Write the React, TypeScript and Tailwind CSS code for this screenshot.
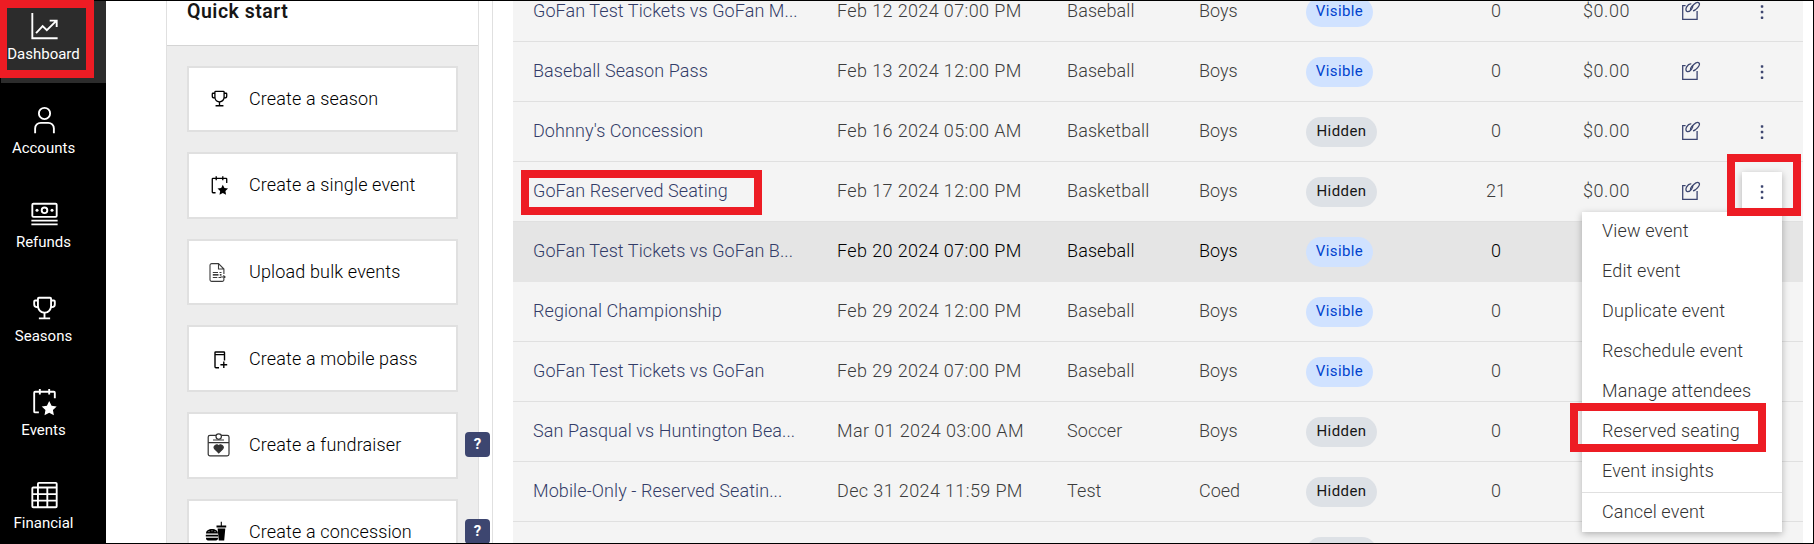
import type { ReactNode } from "react";

type Status = "Visible" | "Hidden";

interface EventRow {
  name: string;
  date: string;
  sport: string;
  group: string;
  status: Status;
  sold: string;
  revenue?: string;
  hovered?: boolean;
  open?: boolean;
}

const rows: EventRow[] = [
  { name: "GoFan Test Tickets vs GoFan M...", date: "Feb 12 2024 07:00 PM", sport: "Baseball", group: "Boys", status: "Visible", sold: "0", revenue: "$0.00" },
  { name: "Baseball Season Pass", date: "Feb 13 2024 12:00 PM", sport: "Baseball", group: "Boys", status: "Visible", sold: "0", revenue: "$0.00" },
  { name: "Dohnny's Concession", date: "Feb 16 2024 05:00 AM", sport: "Basketball", group: "Boys", status: "Hidden", sold: "0", revenue: "$0.00" },
  { name: "GoFan Reserved Seating", date: "Feb 17 2024 12:00 PM", sport: "Basketball", group: "Boys", status: "Hidden", sold: "21", revenue: "$0.00", open: true },
  { name: "GoFan Test Tickets vs GoFan B...", date: "Feb 20 2024 07:00 PM", sport: "Baseball", group: "Boys", status: "Visible", sold: "0", hovered: true },
  { name: "Regional Championship", date: "Feb 29 2024 12:00 PM", sport: "Baseball", group: "Boys", status: "Visible", sold: "0" },
  { name: "GoFan Test Tickets vs GoFan", date: "Feb 29 2024 07:00 PM", sport: "Baseball", group: "Boys", status: "Visible", sold: "0" },
  { name: "San Pasqual vs Huntington Bea...", date: "Mar 01 2024 03:00 AM", sport: "Soccer", group: "Boys", status: "Hidden", sold: "0" },
  { name: "Mobile-Only - Reserved Seatin...", date: "Dec 31 2024 11:59 PM", sport: "Test", group: "Coed", status: "Hidden", sold: "0" },
];

const TROPHY =
  "M26 7h-2V6a2 2 0 0 0-2-2H10a2 2 0 0 0-2 2v1H6a2 2 0 0 0-2 2v3a4 4 0 0 0 4 4h.32A8.19 8.19 0 0 0 15 21.94V26h-5v2h12v-2h-5v-4.06A7.93 7.93 0 0 0 23.74 16H24a4 4 0 0 0 4-4V9a2 2 0 0 0-2-2zM8 14a2 2 0 0 1-2-2V9h2zm14 0a6 6 0 0 1-6.18 6A6.18 6.18 0 0 1 10 13.84V6h12zm4-2a2 2 0 0 1-2 2V9h2z";
const CALENDAR =
  "M26 4h-4V2h-2v2h-8V2h-2v2H6a2 2 0 0 0-2 2v20a2 2 0 0 0 2 2h4v-2H6V6h4v2h2V6h8v2h2V6h4v6h2V6a2 2 0 0 0-2-2z";
const STAR =
  "M21 15l2.55 4.94 5.45.79-4 3.84L26 30l-5-2.56L16 30l1-5.43-4-3.84 5.6-.79z";

function Glyph({ className, children }: { className: string; children: ReactNode }) {
  return (
    <svg viewBox="0 0 32 32" fill="currentColor" className={className}>
      {children}
    </svg>
  );
}

function TrophyIcon({ className }: { className: string }) {
  return (
    <Glyph className={className}>
      <path d={TROPHY} />
    </Glyph>
  );
}

function EventIcon({ className }: { className: string }) {
  return (
    <Glyph className={className}>
      <path d={CALENDAR} />
      <path d={STAR} />
    </Glyph>
  );
}

const navIcon = "size-[30px] shrink-0";

const nav: { label: string; icon: ReactNode }[] = [
  {
    label: "Dashboard",
    icon: (
      <Glyph className={navIcon}>
        <path d="M3 2v27h27M7 23.5l7-7.5 4.5 4.5L28 11M21.5 10.2H29V17" fill="none" stroke="currentColor" strokeWidth="2" />
      </Glyph>
    ),
  },
  {
    label: "Accounts",
    icon: (
      <Glyph className={navIcon}>
        <path d="M16 4a5 5 0 1 1-5 5 5 5 0 0 1 5-5m0-2a7 7 0 1 0 7 7 7 7 0 0 0-7-7zM27 30h-2v-5a5 5 0 0 0-5-5h-8a5 5 0 0 0-5 5v5H5v-5a7 7 0 0 1 7-7h8a7 7 0 0 1 7 7z" />
      </Glyph>
    ),
  },
  {
    label: "Refunds",
    icon: (
      <Glyph className={navIcon}>
        <rect x="3" y="5" width="26" height="14" rx="1.2" fill="none" stroke="currentColor" strokeWidth="2" />
        <circle cx="16" cy="12" r="3" fill="none" stroke="currentColor" strokeWidth="2" />
        <circle cx="8" cy="12" r="1.6" />
        <circle cx="24" cy="12" r="1.6" />
        <path d="M2 22h28v2H2zM2 26h28v2H2z" />
      </Glyph>
    ),
  },
  { label: "Seasons", icon: <TrophyIcon className={navIcon} /> },
  { label: "Events", icon: <EventIcon className={navIcon} /> },
  {
    label: "Financial",
    icon: (
      <Glyph className={navIcon}>
        <path
          d="M9 29V4a1 1 0 0 1 1-1h18a1 1 0 0 1 1 1v24a1 1 0 0 1-1 1H4a1 1 0 0 1-1-1V9a1 1 0 0 1 1-1h25M3 15h26M3 22h26M19 8v21"
          fill="none"
          stroke="currentColor"
          strokeWidth="2"
        />
      </Glyph>
    ),
  },
];

const cards: { label: string; icon: ReactNode; help?: boolean }[] = [
  { label: "Create a season", icon: <TrophyIcon className="size-[21px]" /> },
  { label: "Create a single event", icon: <EventIcon className="size-[21px]" /> },
  {
    label: "Upload bulk events",
    icon: (
      <svg viewBox="0 0 24 24" className="size-6" fill="none" stroke="#3a3a3a" strokeWidth="1.1">
        <path d="M16.900 14V9L11.500 3.600H4.700A1.700 1.700 0 0 0 3 5.300v14.400a1.700 1.700 0 0 0 1.700 1.700h10.500a1.700 1.700 0 0 0 1.700-1.700v-1M11.500 3.600V9h5.400" />
        <path d="M5.800 12.500H11M12.500 12.500h2M5.800 17.500h4.500M11.500 17.500h2.500" />
        <path d="M5.800 14.900h5.700M12.800 14.900h1.700" stroke="#000" strokeWidth="1.3" />
        <path d="M13.500 17h4.600M16.400 15.400l1.700 1.600-1.700 1.600" />
      </svg>
    ),
  },
  {
    label: "Create a mobile pass",
    icon: (
      <svg viewBox="0 0 24 24" className="size-6" fill="none" stroke="currentColor" strokeWidth="1.4">
        <path d="M12 20.8H9a1 1 0 0 1-1-1V5.600a.6.6 0 0 1 .6-.6h8.300a.6.6 0 0 1 .6.6v8M8 7.600h9.500M16.800 14.400v6.600M13.400 17.700h6.800" />
      </svg>
    ),
  },
  {
    label: "Create a fundraiser",
    help: true,
    icon: (
      <svg viewBox="0 0 24 24" className="size-6" fill="none" stroke="#333" strokeWidth="1.2">
        <rect x="1.200" y="2.300" width="20.800" height="20.500" rx="1.800" />
        <path d="M1.200 9.600H22M6 7h11" />
        <circle cx="11.700" cy="3.600" r="2.700" fill="#fff" />
        <path d="M11.700 19.800l-4-3.900a2.400 2.400 0 0 1 4-2.900 2.400 2.400 0 0 1 4 2.900z" fill="#333" />
      </svg>
    ),
  },
  {
    label: "Create a concession",
    help: true,
    icon: (
      <svg viewBox="0 0 24 24" className="size-6 overflow-visible" fill="#000">
        <path d="M-1 13.600C-1 10.600 1.600 9 5 9s6 1.600 6 4.600zM-1.200 14.800H11v1.800H-1.200zM-1 17.800h12v.8a1.800 1.800 0 0 1-1.800 1.800H.8A1.800 1.800 0 0 1-1 18.600z" />
        <path d="M9.500 5.600h9.700v2H9.500zM10.600 8.400h7.700l-1.100 12h-5.400z" />
        <path d="M14.300 6V1.800" stroke="#000" strokeWidth="1.1" />
        <path d="M1.500 11.600h1M4.500 10.800h1M7.500 11.600h1" stroke="#fff" strokeWidth=".7" />
      </svg>
    ),
  },
];

const menu = ["View event", "Edit event", "Duplicate event", "Reschedule event", "Manage attendees", "Reserved seating", "Event insights"];

function Sidebar() {
  return (
    <nav className="w-[106px] shrink-0 bg-black text-white">
      <div className="-mt-[11px] flex flex-col">
        {nav.map((n, i) => (
          <div key={n.label} className={i === 0 ? "h-[93.9px] bg-[#2c2c2c]" : "h-[93.9px]"}>
            <div className="flex w-[87px] flex-col items-center gap-[3px] pt-[22px]">
              <div className="flex translate-x-[0.5px]">{n.icon}</div>
              <span className="text-[15px] leading-5">{n.label}</span>
            </div>
          </div>
        ))}
      </div>
    </nav>
  );
}

function QuickStart() {
  return (
    <section className="ml-[60px] w-[313px] shrink-0 border-x border-[#e0e0e0] bg-[#ededed]">
      <header className="h-[46px] border-b border-[#d4d4d4] bg-white pl-5 text-[19.5px] leading-[23px] font-semibold tracking-[0.5px] text-[#161616]">
        Quick start
      </header>
      <div className="flex flex-col gap-5 pt-[19.5px] pr-5 pl-5">
        {cards.map((c) => (
          <div
            key={c.label}
            className="relative flex h-[66.66px] shrink-0 items-center gap-[18px] border-2 border-[#e0e0e0] bg-white pl-[18px] text-lg font-light text-black"
          >
            <div className="flex size-6 items-center justify-center">{c.icon}</div>
            <span className="tracking-[0.14px]">{c.label}</span>
            {c.help && (
              <span className="absolute top-[18px] -right-[34px] flex size-[25px] items-center justify-center rounded-[4px] bg-[#3d4670] text-[15px] font-bold text-white">
                ?
              </span>
            )}
          </div>
        ))}
      </div>
    </section>
  );
}

function StatusPill({ status }: { status: Status }) {
  return (
    <span
      className={
        status === "Visible"
          ? "flex h-[30px] w-[67px] items-center justify-center rounded-full bg-[#d0e2ff] pt-px text-[15px] font-normal tracking-[0.4px] text-[#0043ce]"
          : "flex h-[30px] w-[71px] items-center justify-center rounded-full bg-[#dde1e6] pt-px text-[15px] font-normal tracking-[0.45px] text-[#161616]"
      }
    >
      {status}
    </span>
  );
}

function LinkIcon() {
  return (
    <svg viewBox="0 0 18 18" className="size-[18px] overflow-visible" fill="none" stroke="#3d4670" strokeWidth="1.3">
      <path d="M3.600 3.700H.7v13.700h14.400V9" />
      <path d="M9.300 1.900C7.400 1.500 5.800 3 4.700 4.900 3.500 7 3.700 9.300 5.300 9.600c1.500.3 3-.7 4.300-2.500 1-1.400 1.500-2.700 1-3.800" />
      <path d="M11 8.900c1.700-.2 3.300-1.700 4.700-3.300C17.300 3.700 18 2 17 1c-1.100-1-3.400-.1-5.200 1.500C9.600 4.400 7.700 7 8.900 8.400" />
    </svg>
  );
}

function Kebab() {
  return (
    <svg viewBox="0 0 4 16" className="h-4 w-1" fill="#3d4670">
      <rect x=".8" y="1.2" width="2.5" height="2.5" rx=".6" />
      <rect x=".8" y="6.8" width="2.5" height="2.5" rx=".6" />
      <rect x=".8" y="12.4" width="2.5" height="2.5" rx=".6" />
    </svg>
  );
}

function EventMenu() {
  return (
    <div className="absolute top-10 right-0 z-10 flex h-80 w-[200px] flex-col bg-white text-lg font-light tracking-[0.16px] text-[#333333] shadow-[0_2px_7px_rgba(0,0,0,0.28)]">
      {menu.map((m) => (
        <div key={m} className="flex h-10 shrink-0 items-center pb-px pl-5">
          {m}
        </div>
      ))}
      <div className="flex h-10 shrink-0 items-center border-t border-[#e0e0e0] pl-5">Cancel event</div>
      <div className="absolute top-[191px] -left-3 h-[49px] w-[196px] border-8 border-[#ed1c24]" />
    </div>
  );
}

const rowGrid = "grid h-[60px] shrink-0 grid-cols-[304px_230px_132px_107px_130px_120px_74px_112px_40px] items-center border-b pb-px pl-5";

function Row({ row }: { row: EventRow }) {
  return (
    <div className={row.hovered ? `${rowGrid} border-[#e5e5e5] bg-[#e5e5e5] text-black` : `${rowGrid} border-[#e0e0e0] text-[#3c3c3c]`}>
      <span className="relative tracking-[0.08px] text-[#333c68]">
        {row.name}
        {row.open && <span className="absolute -top-[7px] -left-3 h-[45px] w-[241px] border-8 border-[#ed1c24]" />}
      </span>
      <span className="tracking-[0.38px]">{row.date}</span>
      <span className="tracking-[0.1px]">{row.sport}</span>
      <span>{row.group}</span>
      <div className="pt-px">
        <StatusPill status={row.status} />
      </div>
      <span className="text-center">{row.sold}</span>
      {row.revenue && (
        <>
          <span className="text-right tracking-[0.55px]">{row.revenue}</span>
          <div className="pl-[52px]">
            <LinkIcon />
          </div>
          {row.open ? (
            <div className="relative mt-px size-10">
              <div className="flex size-10 items-center justify-center bg-white shadow-[0_2px_7px_rgba(0,0,0,0.28)]">
                <Kebab />
              </div>
              <EventMenu />
              <div className="absolute -top-[18px] -left-[15px] z-20 h-[62px] w-[74px] border-8 border-[#ed1c24]" />
            </div>
          ) : (
            <div className="mt-px flex size-10 items-center justify-center">
              <Kebab />
            </div>
          )}
        </>
      )}
    </div>
  );
}

function EventsTable() {
  return (
    <section className="w-[1290px] shrink-0 bg-[#f4f4f4] text-lg font-light">
      <div className="-mt-[18px] flex flex-col">
        {rows.map((r) => (
          <Row key={r.name} row={r} />
        ))}
        <div className={`${rowGrid} border-[#e0e0e0]`}>
          <div className="col-start-5 pt-px">
            <div className="h-[30px] w-[71px] rounded-full bg-[#dde1e6]" />
          </div>
        </div>
      </div>
    </section>
  );
}

export default function App() {
  return (
    <div className="relative flex h-[544px] w-[1814px] overflow-hidden bg-white font-['Roboto',sans-serif]">
      <Sidebar />
      <QuickStart />
      <div className="ml-[13px] w-[21px] shrink-0 border-l border-[#e0e0e0]" />
      <EventsTable />
      <div className="pointer-events-none absolute inset-0 border border-black" />
      <div className="absolute top-0 -left-px h-[78px] w-[95px] border-8 border-[#ed1c24]" />
    </div>
  );
}
